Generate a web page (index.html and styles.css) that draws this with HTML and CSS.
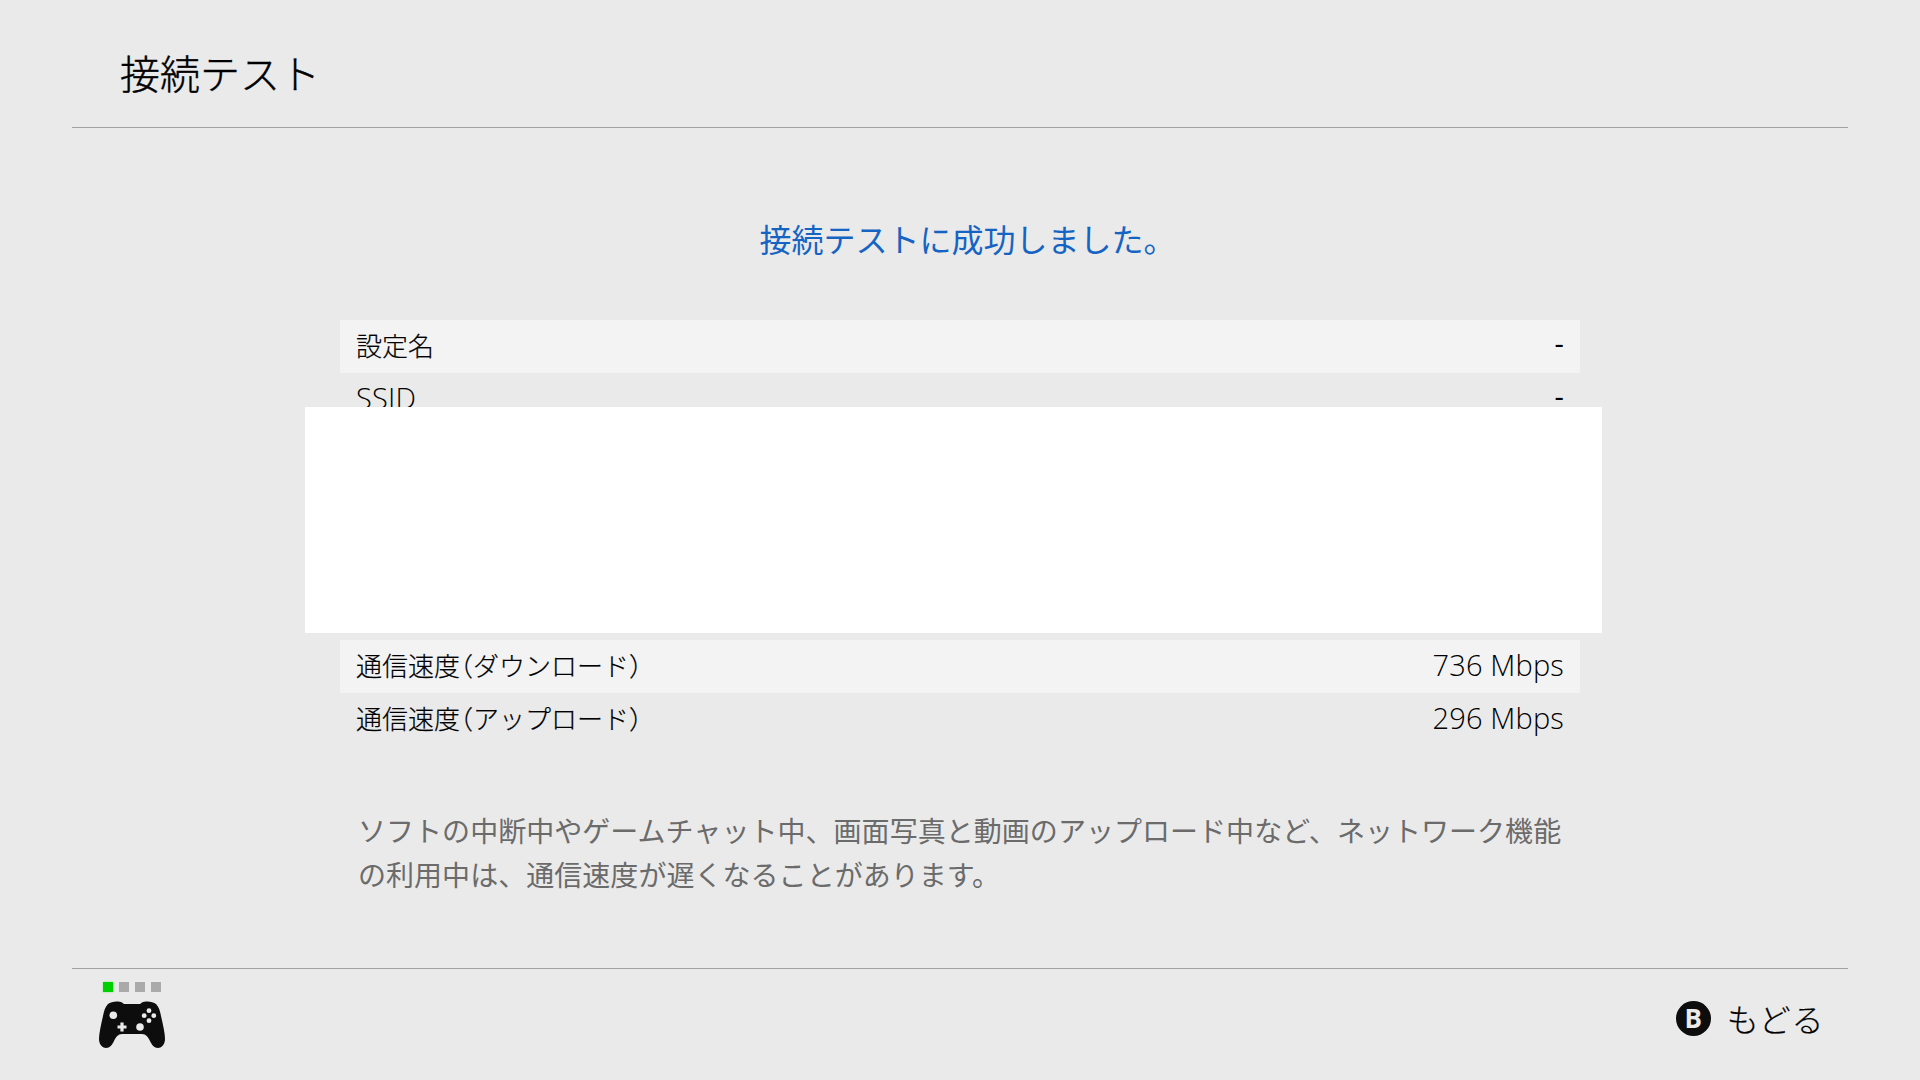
FILE: index.html
```html
<!DOCTYPE html>
<html lang="ja">
<head>
<meta charset="utf-8">
<title>接続テスト</title>
<link rel="stylesheet" href="styles.css">
</head>
<body>
<div class="page">
  <header class="header"><h1 class="title">接続テスト</h1></header>
  <main class="main">
    <p class="message">接続テストに成功しました。</p>
    <div class="table">
      <div class="row"><span>設定名</span><span class="latin dash">-</span></div>
      <div class="row"><span class="latin">SSID</span><span class="latin dash">-</span></div>
      <div class="row"></div>
      <div class="row"></div>
      <div class="row"></div>
      <div class="row"></div>
      <div class="row"><span>通信速度<span class="paren">（</span>ダウンロード<span class="paren">）</span></span><span class="latin">736 Mbps</span></div>
      <div class="row"><span>通信速度<span class="paren">（</span>アップロード<span class="paren">）</span></span><span class="latin">296 Mbps</span></div>
      <div class="cover"></div>
    </div>
    <p class="note">ソフトの中断中やゲームチャット中、画面写真と動画のアップロード中など、ネットワーク機能の利用中は、通信速度が遅くなることがあります。</p>
  </main>
  <footer class="footer">
    <div class="player">
      <div class="dots"><i class="dot dot-on"></i><i class="dot"></i><i class="dot"></i><i class="dot"></i></div>
      <svg class="pad" viewBox="0 0 66 47" width="66" height="47">
        <path fill="#0d0d0d" d="M9 3C12 .5 19 -.5 23 1.500L25 3H41L43 1.500C47 -.5 54 .5 57 3C60 6 61 10 62 15C64 24 66 32 66 38C66 44 62 47 59 47C55 47 53 44 51 40C49 36 47 33 43 33H23C19 33 17 36 15 40C13 44 11 47 7 47C4 47 0 44 0 38C0 32 2 24 4 15C5 10 6 6 9 3Z"/>
        <g fill="#eaeaea">
          <circle cx="14.300" cy="14.200" r="3.800"/>
          <circle cx="41" cy="26" r="3.800"/>
          <path d="M18.500 24.400H21.400V21.500H24.600V24.400H27.500V27.600H24.600V30.500H21.400V27.600H18.500Z"/>
          <circle cx="50" cy="9.700" r="2.400"/>
          <circle cx="50" cy="19.700" r="2.400"/>
          <circle cx="45.200" cy="14.700" r="2.400"/>
          <circle cx="54.800" cy="14.700" r="2.400"/>
        </g>
      </svg>
    </div>
    <div class="back"><span class="btn-b">B</span><span class="back-label">もどる</span></div>
  </footer>
</div>
</body>
</html>
```
FILE: styles.css
```css
* { box-sizing: border-box; }
html, body { margin: 0; padding: 0; }
body {
  width: 1920px;
  height: 1080px;
  overflow: hidden;
  background: #eaeaea;
  color: #000;
  font-family: "Noto Sans CJK JP", "Open Sans", sans-serif;
  font-weight: 300;
}
.page {
  height: 1080px;
  padding: 0 72px;
  display: flex;
  flex-direction: column;
}
.header {
  height: 128px;
  flex: none;
  padding: 0 48px 0;
  border-bottom: 1px solid #a3a3a3;
  display: flex;
  align-items: center;
}
.title {
  margin: 16px 0 0;
  font-size: 40px;
  font-weight: 300;
  line-height: 56px;
  -webkit-text-stroke: 0.4px #000;
}
.main {
  flex: 1;
  padding: 0 268px;
  display: flex;
  flex-direction: column;
}
.message {
  margin: 88px 0 0;
  height: 44px;
  padding-left: 15px;
  font-size: 32px;
  line-height: 44px;
  text-align: center;
  color: #1564c4;
  font-weight: 400;
}
.table {
  position: relative;
  margin-top: 60px;
}
.row {
  height: 53.33px;
  padding: 0 16px 4px;
  display: flex;
  justify-content: space-between;
  align-items: center;
  font-size: 26px;
  line-height: 36px;
  font-weight: 300;
  -webkit-text-stroke: 0.2px #000;
}
.row:nth-child(odd) { background: #f3f3f3; }
.latin {
  font-family: "Open Sans", sans-serif;
  font-size: 29px;
  letter-spacing: 0.15px;
  font-weight: 300;
  -webkit-text-stroke: 0;
}
.dash {
  padding-bottom: 4px;
  font-weight: 400;
}
.paren { font-feature-settings: "halt"; }
.cover {
  position: absolute;
  left: -35px;
  top: 87px;
  width: 1297px;
  height: 226px;
  background: #fff;
}
.note {
  margin: 61px 14px 0 18px;
  font-size: 28px;
  line-height: 44.5px;
  letter-spacing: 0.04px;
  color: #6b6b6b;
  font-weight: 400;
}
.footer {
  height: 112px;
  flex: none;
  border-top: 1px solid #a3a3a3;
  display: flex;
  justify-content: space-between;
  align-items: flex-start;
  padding: 13px 24px 0 27px;
}
.player {
  display: flex;
  flex-direction: column;
  gap: 9px;
}
.dots {
  display: flex;
  gap: 6px;
  padding-left: 4px;
}
.dot {
  width: 10px;
  height: 10px;
  background: #aaa;
  display: block;
}
.dot-on {
  background: #00d000;
  box-shadow: 0 0 2px #7fe87f;
}
.pad { display: block; }
.back {
  display: flex;
  align-items: center;
  gap: 16px;
  margin-top: 14px;
}
.btn-b {
  width: 35px;
  height: 35px;
  border-radius: 50%;
  background: #0d0d0d;
  color: #eaeaea;
  font-family: "Open Sans", sans-serif;
  font-weight: 700;
  font-size: 26px;
  line-height: 35px;
  text-align: center;
}
.back-label {
  font-size: 32px;
  line-height: 44px;
  letter-spacing: 0.6px;
  font-weight: 300;
  -webkit-text-stroke: 0.2px #000;
}
```
